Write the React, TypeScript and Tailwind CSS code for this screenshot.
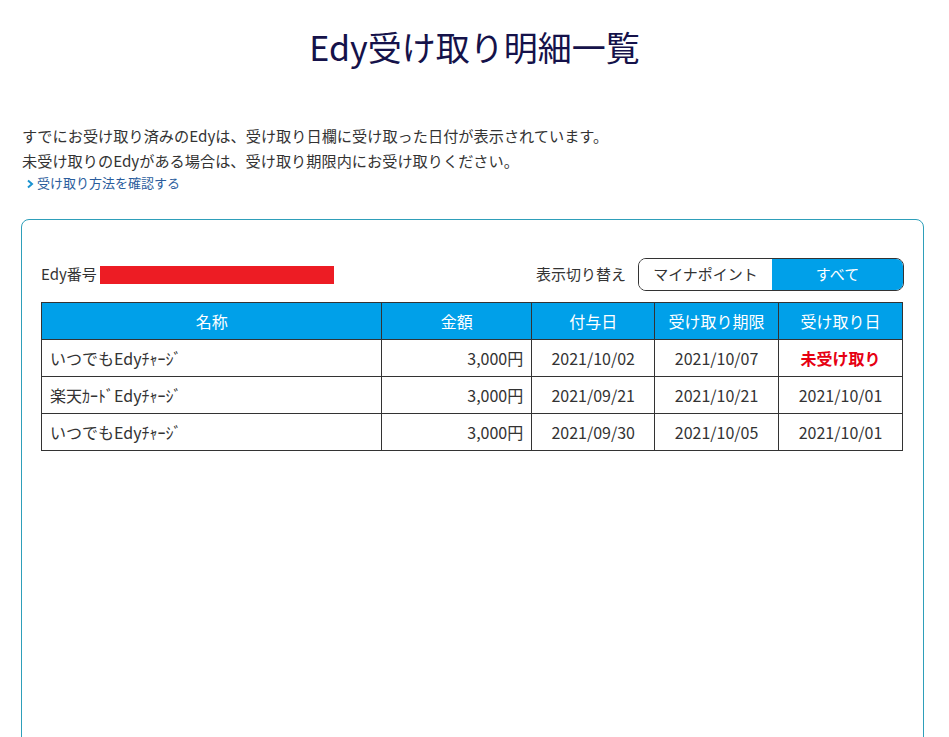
import React from 'react';

const FONT = { fontFamily: '"Noto Sans CJK JP", "Noto Sans", sans-serif' };

interface Row {
  name: string;
  amount: string;
  granted: string;
  deadline: string;
  received: string | null;
}

const ROWS: Row[] = [
  { name: 'いつでもEdyﾁｬｰｼﾞ', amount: '3,000円', granted: '2021/10/02', deadline: '2021/10/07', received: null },
  { name: '楽天ｶｰﾄﾞEdyﾁｬｰｼﾞ', amount: '3,000円', granted: '2021/09/21', deadline: '2021/10/21', received: '2021/10/01' },
  { name: 'いつでもEdyﾁｬｰｼﾞ', amount: '3,000円', granted: '2021/09/30', deadline: '2021/10/05', received: '2021/10/01' },
];

export default function App() {
  return (
    <div className="h-[737px] bg-white text-[#333] overflow-hidden" style={FONT}>
      {/* Title */}
      <h1 className="pt-[23px] text-center text-[34px] leading-[48px] text-[#15124a]">
        Edy受け取り明細一覧
      </h1>

      <div className="px-[21px] pt-[52px]">
        {/* Notes */}
        <p className="text-[15.2px] leading-[25px] pl-[1px]">
          すでにお受け取り済みのEdyは、受け取り日欄に受け取った日付が表示されています。
        </p>
        <p className="text-[15.2px] leading-[25px] pl-[1px]">
          未受け取りのEdyがある場合は、受け取り期限内にお受け取りください。
        </p>
        <a href="#" className="flex items-center gap-[2px] pl-[5px] text-[13px] leading-[20px] text-[#2a5c9c]">
          <svg width="9" height="10" viewBox="0 0 9 10" className="mt-[1px]">
            <path d="M2 1.5 L6 5 L2 8.5" fill="none" stroke="#1b93d0" strokeWidth="2" />
          </svg>
          受け取り方法を確認する
        </a>

        {/* Card */}
        <div className="mt-[26px] w-[903px] min-h-[560px] rounded-[8px] border border-[#2e9fba] px-[19px] pt-[38px]">
          <div className="flex items-center justify-between h-[33px]">
            <div className="flex items-center text-[15px]">
              <span>Edy番号</span>
              <span className="ml-[3px] inline-block h-[18px] w-[234px] bg-[#ed1c24]" />
            </div>
            <div className="flex items-center">
              <span className="text-[15px] mr-[12px]">表示切り替え</span>
              <div className="flex h-[33px] overflow-hidden rounded-[8px] border border-[#333]">
                <button className="w-[133px] bg-white text-[15px] text-[#333]">マイナポイント</button>
                <button className="w-[131px] bg-[#00a0e9] text-[15px] text-white">すべて</button>
              </div>
            </div>
          </div>

          <table className="mt-[11px] w-[862px] border-collapse text-[16px]">
            <thead>
              <tr className="h-[37px] bg-[#00a0e9] text-white">
                <th className="w-[341px] border border-[#333] font-normal">名称</th>
                <th className="w-[150px] border border-[#333] font-normal">金額</th>
                <th className="w-[123px] border border-[#333] font-normal">付与日</th>
                <th className="w-[124px] border border-[#333] font-normal">受け取り期限</th>
                <th className="w-[124px] border border-[#333] font-normal">受け取り日</th>
              </tr>
            </thead>
            <tbody>
              {ROWS.map((r, i) => (
                <tr key={i} className="h-[37px]">
                  <td className="border border-[#333] px-[8px]">{r.name}</td>
                  <td className="border border-[#333] px-[8px] text-right">{r.amount}</td>
                  <td className="border border-[#333] text-center">{r.granted}</td>
                  <td className="border border-[#333] text-center">{r.deadline}</td>
                  <td className="border border-[#333] text-center">
                    {r.received ?? <span className="font-bold text-[#e60012]">未受け取り</span>}
                  </td>
                </tr>
              ))}
            </tbody>
          </table>
        </div>
      </div>
    </div>
  );
}
